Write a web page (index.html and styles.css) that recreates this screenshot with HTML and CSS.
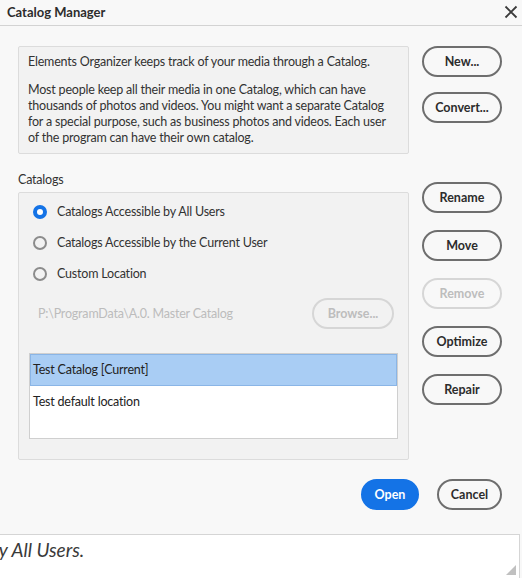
FILE: index.html
```html
<!DOCTYPE html>
<html lang="en">
<head>
    <meta charset="UTF-8">
    <title>Catalog Manager</title>
    <link rel="stylesheet" href="styles.css">
</head>
<body>
    <div class="titlebar">
        <span class="title">Catalog Manager</span>
        <svg class="close" width="14" height="14" viewBox="0 0 14 14">
            <path d="M1.5 1.5 L12.5 12.5 M12.5 1.5 L1.5 12.5" stroke="#3a3a3a" stroke-width="1.8" fill="none"/>
        </svg>
    </div>

    <div class="main">
        <div class="info">
            <p>Elements Organizer keeps track of your media through a Catalog.</p>
            <p>Most people keep all their media in one Catalog, which can have thousands of photos and videos. You might want a separate Catalog for a special purpose, such as business photos and videos. Each user of the program can have their own catalog.</p>
        </div>
        <div class="side top-side">
            <button class="btn">New...</button>
            <button class="btn">Convert...</button>
        </div>

        <div class="catalogs">
            <div class="section-label">Catalogs</div>
            <div class="group">
                <label class="radio checked"><span class="dot"></span>Catalogs Accessible by All Users</label>
                <label class="radio"><span class="dot"></span>Catalogs Accessible by the Current User</label>
                <label class="radio"><span class="dot"></span>Custom Location</label>
                <div class="path-row">
                    <span class="path">P:\ProgramData\A.0. Master Catalog</span>
                    <button class="btn browse" disabled>Browse...</button>
                </div>
                <div class="list">
                    <div class="item selected">Test Catalog [Current]</div>
                    <div class="item">Test default location</div>
                </div>
            </div>
        </div>
        <div class="side cat-side">
            <button class="btn">Rename</button>
            <button class="btn">Move</button>
            <button class="btn" disabled>Remove</button>
            <button class="btn">Optimize</button>
            <button class="btn">Repair</button>
        </div>
    </div>

    <div class="footer">
        <button class="btn primary">Open</button>
        <button class="btn">Cancel</button>
    </div>

    <div class="status">
        <span class="status-text">by All Users.</span>
        <span class="grip"></span>
    </div>
</body>
</html>
```

FILE: styles.css
```css
* {
    margin: 0;
    padding: 0;
    box-sizing: border-box;
}

body {
    font-family: Lato, "Open Sans", sans-serif;
    font-size: 12.5px;
    letter-spacing: -0.2px;
    color: #323232;
    background: #f8f8f8;
    width: 522px;
    height: 578px;
    overflow: hidden;
}

.titlebar {
    height: 26px;
    border-bottom: 1px solid #d3d3d3;
    display: flex;
    align-items: center;
    justify-content: space-between;
    padding: 0 4px 2px 7px;
}

.title {
    font-weight: bold;
    font-size: 13px;
    letter-spacing: 0;
    color: #2c2c2c;
}

.main {
    display: grid;
    grid-template-columns: 391px 80px;
    column-gap: 13px;
    padding-left: 18px;
    margin-top: 20px;
}

.info {
    background: #f2f2f2;
    border: 1px solid #dcdcdc;
    border-radius: 2px;
    padding: 7px 9px 8px;
    line-height: 16px;
    height: 108px;
}

.info p + p {
    margin-top: 12px;
}

.side {
    display: flex;
    flex-direction: column;
}

.top-side {
    gap: 15px;
}

.btn {
    font-family: inherit;
    font-size: 12.5px;
    font-weight: bold;
    letter-spacing: 0;
    color: #2c2c2c;
    background: transparent;
    border: 2px solid #6e6e6e;
    border-radius: 16px;
    height: 31px;
    width: 80px;
    cursor: pointer;
}

.btn:disabled {
    color: #bdbdbd;
    border-color: #d6d6d6;
    cursor: default;
}

.catalogs {
    margin-top: 18px;
}

.section-label {
    line-height: 16px;
    margin-bottom: 4px;
}

.group {
    border: 1px solid #dcdcdc;
    border-radius: 2px;
    background: #f2f2f2;
    height: 268px;
    padding: 3px 10px 0 14px;
}

.radio {
    display: flex;
    align-items: center;
    height: 31px;
}

.dot {
    width: 14px;
    height: 14px;
    border-radius: 50%;
    border: 2px solid #8c8c8c;
    margin-right: 10px;
    flex-shrink: 0;
}

.radio.checked .dot {
    border: 4.5px solid #1473e6;
    background: #fff;
}

.path-row {
    display: flex;
    align-items: center;
    justify-content: space-between;
    padding: 9px 4px 0 5px;
}

.path {
    color: #bcbcbc;
}

.browse {
    width: 82px;
}

.list {
    margin: 24px 0 0 -4px;
    width: 369px;
    height: 86px;
    background: #fff;
    border: 1px solid #cfcfcf;
}

.item {
    height: 32px;
    line-height: 32px;
    padding-left: 3px;
    color: #222;
}

.item.selected {
    background: #a9cdf4;
    border: 1px solid #8ab5e6;
    line-height: 30px;
    padding-left: 2px;
}

.cat-side {
    margin-top: 28px;
    gap: 17px;
}

.footer {
    display: flex;
    justify-content: flex-end;
    gap: 18px;
    padding: 19px 20px 0 0;
    height: 74px;
}

.footer .btn {
    width: 65px;
}

.btn.primary {
    background: #1473e6;
    border-color: #1473e6;
    color: #fff;
    width: 58px;
}

.status {
    border-top: 1px solid #d5d5d5;
    background: #fff;
    height: 44px;
    margin-right: 2px;
    border-right: 1px solid #d5d5d5;
    overflow: hidden;
    position: relative;
}

.status-text {
    display: block;
    font-style: italic;
    font-size: 19px;
    letter-spacing: 0;
    color: #3a3a3a;
    margin: 3px 0 0 -11px;
}

.grip {
    position: absolute;
    right: 3px;
    bottom: 3px;
    width: 10px;
    height: 10px;
    background: radial-gradient(circle, #777 0.6px, transparent 0.8px) 0 0 / 2px 2px;
    clip-path: polygon(100% 0, 100% 100%, 0 100%);
}
```
